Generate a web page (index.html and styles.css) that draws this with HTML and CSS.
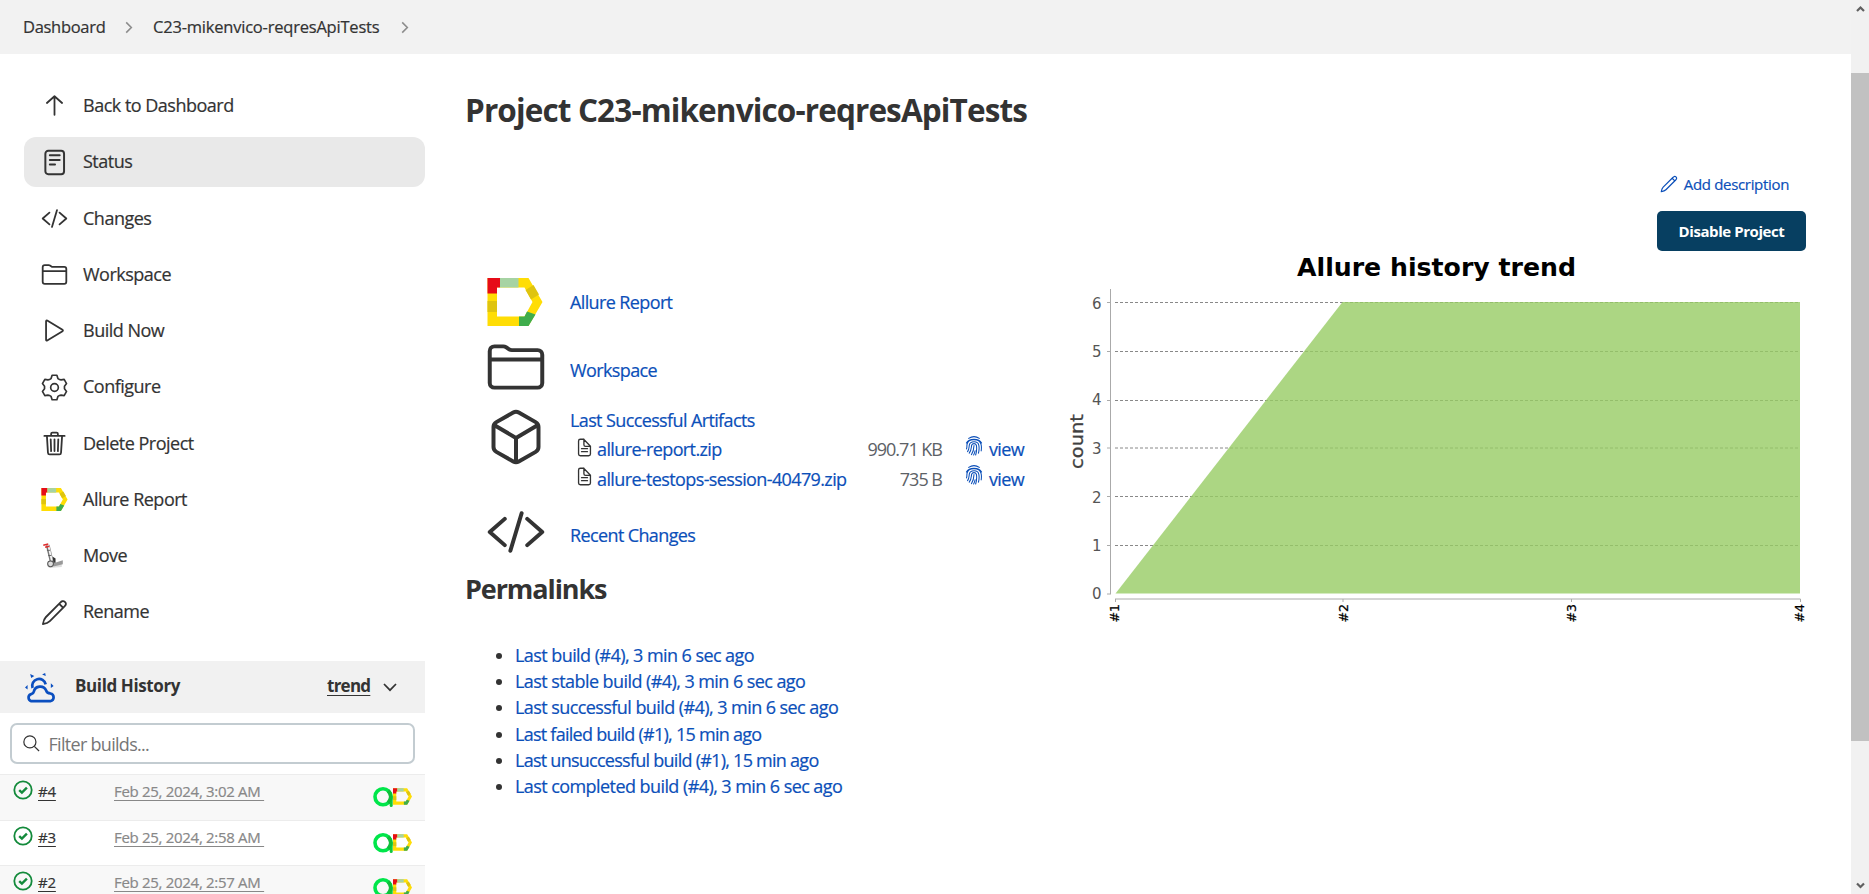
FILE: index.html
```html
<!DOCTYPE html>
<html lang="en">
<head>
<meta charset="utf-8">
<title>C23-mikenvico-reqresApiTests [Jenkins]</title>
<link rel="stylesheet" href="styles.css">
</head>
<body>
<svg class="defs" width="0" height="0" aria-hidden="true">
  <symbol id="code" viewBox="0 0 512 512"><path fill="none" stroke="currentColor" stroke-linecap="round" stroke-linejoin="round" stroke-width="34" d="M160 368L32 256l128-112M352 368l128-112-128-112M304 96l-96 320"/></symbol>
  <symbol id="folder" viewBox="0 0 512 512"><path fill="none" stroke="currentColor" stroke-linecap="round" stroke-linejoin="round" stroke-width="34" d="M440 432H72a40 40 0 01-40-40V120a40 40 0 0140-40h75.89a40 40 0 0122.19 6.72l27.84 18.56a40 40 0 0022.19 6.72H440a40 40 0 0140 40v240a40 40 0 01-40 40zM32 192h448"/></symbol>
  <symbol id="pencil" viewBox="0 0 512 512"><path fill="none" stroke="currentColor" stroke-linecap="round" stroke-linejoin="round" stroke-width="34" d="M36 476c10-62 22-98 54-130L366 70c22-22 54-48 86-16l8 8c26 30 10 56-14 80L168 420c-34 34-70 46-132 56zM346 92l74 74"/></symbol>
  <symbol id="allure" viewBox="0 0 55 48"><path fill="#ffdd05" fill-rule="evenodd" d="M0 0h41l14 24-14 24H0zM9.500 9.500v29h27.500l8-14.500-8-14.500z"/><path fill="#e60b18" d="M0 0h12.500v9.500h-3v6H0z"/><path fill="#a6d3a3" d="M12.500 0H31v9.500H12.500z"/><path fill="#dfc40f" d="M0 23h9.500v11H0zM38 12l8-5 5.500 9.500-8 5z"/><path fill="#3fad4c" d="M31.500 38.500H37l2.500-5 8.500 3L41 48h-9.500z"/></symbol>
  <symbol id="doc" viewBox="0 0 512 512"><path fill="none" stroke="currentColor" stroke-linejoin="round" stroke-linecap="round" stroke-width="36" d="M416 221v210a48 48 0 01-48 48H144a48 48 0 01-48-48V81a48 48 0 0148-48h90l182 188zM240 33v148c0 26 18 43 44 43h132M176 288h160M176 368h160"/></symbol>
  <symbol id="finger" viewBox="0 0 512 512"><g fill="none" stroke="currentColor" stroke-width="27" stroke-linecap="round"><path d="M120 60C200 8 312 8 392 60M62 180C130 48 382 48 450 180M64 330c14-34 8-66 12-110 28-162 322-166 362 0 12 54 12 96 2 160M92 400c44-60 34-110 44-168 24-108 216-112 242 0 12 50 12 124-8 208M134 440c60-74 50-150 62-204 18-54 102-54 120 0 12 56 12 148-18 250M190 478c54-86 64-152 66-236M246 488c16-32 30-68 38-110"/></g></symbol>
  <symbol id="ok" viewBox="0 0 20 20"><circle cx="10" cy="10" r="8.700" fill="none" stroke="#138a3b" stroke-width="1.800"/><path fill="none" stroke="#138a3b" stroke-width="2.400" d="M6.200 10.200l2.700 2.500 5-5"/></symbol>
  <symbol id="ring" viewBox="0 0 20 20"><path d="M18.200 10v8.500" stroke="#12c63e" stroke-width="3" stroke-linecap="round"/><circle cx="10" cy="9.800" r="8" fill="none" stroke="#00e64a" stroke-width="3.600"/><path d="M15 3.800a8 8 0 0 1 0 12" fill="none" stroke="#0fbd3a" stroke-width="3.600"/></symbol>
  <symbol id="chev" viewBox="0 0 8 14"><path fill="none" stroke="currentColor" stroke-width="1.700" d="M1 1.500L6.500 7 1 12.500"/></symbol>
</svg>

<div class="page">
  <header class="crumbs">
    <a class="crumb-a">Dashboard</a><svg class="sep"><use href="#chev"/></svg><a class="crumb-b">C23-mikenvico-reqresApiTests</a><svg class="sep"><use href="#chev"/></svg>
  </header>
  <div class="body">
    <aside class="side">
      <nav class="tasks">
        <a class="task"><svg viewBox="0 0 512 512"><path class="ln" d="M112 208L256 80l144 128M256 92v340"/></svg><span>Back to Dashboard</span></a>
        <a class="task on"><svg viewBox="0 0 26 26"><g class="l26"><rect x="4.200" y="1.700" width="18" height="22.600" rx="2.800"/><path d="M8.500 6h9.500M8.500 10.500h9.500M8.500 15h5"/></g></svg><span>Status</span></a>
        <a class="task"><svg><use href="#code"/></svg><span>Changes</span></a>
        <a class="task"><svg><use href="#folder"/></svg><span>Workspace</span></a>
        <a class="task"><svg viewBox="0 0 512 512"><path class="ln" d="M96 80v352c0 14 10 20 22 14l290-176c11-7 11-21 0-28L118 66c-12-7-22 0-22 14z"/></svg><span>Build Now</span></a>
        <a class="task"><svg viewBox="0 0 26 26"><g class="l26 thin"><circle cx="13" cy="13" r="3.700"/><path d="M10.700 1.200h4.600l1 3.200c1 .7 2 1.100 3 1.200l3-.4 2.300 4-2 2.500v2.600l2 2.500-2.300 4-3-.4c-1 .1-2 .5-3 1.200l-1 3.200h-4.600l-1-3.200c-1-.7-2-1.100-3-1.200l-3 .4-2.300-4 2-2.500v-2.600l-2-2.500 2.300-4 3 .4c1-.1 2-.5 3-1.200z"/></g></svg><span>Configure</span></a>
        <a class="task"><svg viewBox="0 0 512 512"><path class="ln" d="M112 112l20 320c1 18 14 32 32 32h184c18 0 31-14 32-32l20-320M64 112h384M192 112V72c0-14 10-24 24-24h80c14 0 24 10 24 24v40M256 176v224M184 176l8 224M328 176l-8 224"/></svg><span>Delete Project</span></a>
        <a class="task"><svg viewBox="0 0 26 26"><use href="#allure" y="2" width="26" height="22"/></svg><span>Allure Report</span></a>
        <a class="task"><svg viewBox="0 0 26 26"><path d="M6 23l14-2.500v3.500L8 25z" fill="#ddd"/><path d="M12 20.500l9-3v4l-9 2z" fill="#999"/><path d="M11 14l3 2v4h-3z" fill="#333"/><path d="M6.500 3l4 17" stroke="#777" stroke-width="3.600"/><path d="M7 3l3.500 15" stroke="#f4f4f4" stroke-width="1.800"/><path d="M5.700 8h3M7 13h3" stroke="#555" stroke-width=".8"/><path d="M2.200 3.200L7 2M4 5l4-1" stroke="#e02b2b" stroke-width="1.500"/><circle cx="9.200" cy="21" r="2.800" fill="#ddd" stroke="#555"/></svg><span>Move</span></a>
        <a class="task"><svg><use href="#pencil"/></svg><span>Rename</span></a>
      </nav>
      <div class="history-head">
        <svg class="weather" viewBox="0 0 30 30"><path d="M6 27.300h18.500a3.800 3.800 0 0 0 0-7.500c-2.500-.2-3.500-1-4-2.800a6.300 6.300 0 0 0-12 1.200c-.4 2-1.500 2-3 2.400a3.600 3.600 0 0 0 .5 6.700z" fill="none" stroke="#0b4fc0" stroke-width="2.600"/><path d="M7.300 14.500a6.600 6.600 0 1 1 12.700-3.500" fill="none" stroke="#0b4fc0" stroke-width="2.600"/><path d="M5 1l4 1.800-3 2zM16.500 1.500L19.500 0l.6 3zM0 14l2.500-2.500V16zM25 10l2.700 2.500-2.700 2z" fill="#0b4fc0"/></svg>
        <b class="bh">Build History</b><b class="trend">trend</b>
        <svg class="down" viewBox="0 0 14 9"><path d="M1 1l6 6.200L13 1" fill="none" stroke="#333" stroke-width="1.700"/></svg>
      </div>
      <div class="filter"><svg viewBox="0 0 18 18"><circle cx="7.300" cy="7.300" r="6.400"/><path d="M12 12l5 5"/></svg><span>Filter builds...</span></div>
      <div class="build first"><svg class="ok"><use href="#ok"/></svg><a class="num">#4</a><a class="date">Feb 25, 2024, 3:02 AM&nbsp;</a><svg class="ring"><use href="#ring"/></svg><svg class="al"><use href="#allure"/></svg></div>
      <div class="build"><svg class="ok"><use href="#ok"/></svg><a class="num">#3</a><a class="date">Feb 25, 2024, 2:58 AM&nbsp;</a><svg class="ring"><use href="#ring"/></svg><svg class="al"><use href="#allure"/></svg></div>
      <div class="build"><svg class="ok"><use href="#ok"/></svg><a class="num">#2</a><a class="date">Feb 25, 2024, 2:57 AM&nbsp;</a><svg class="ring"><use href="#ring"/></svg><svg class="al"><use href="#allure"/></svg></div>
    </aside>
    <main class="main">
      <div class="left">
        <h1>Project C23-mikenvico-reqresApiTests</h1>
        <div class="row r1"><svg class="big-al"><use href="#allure"/></svg><a>Allure Report</a></div>
        <div class="row r2"><svg class="big"><use href="#folder"/></svg><a>Workspace</a></div>
        <div class="row r3">
          <svg class="big" viewBox="0 0 512 512"><path class="ln" d="M448 341.400V170.600A48 48 0 00423.700 129l-144-82a48 48 0 00-47.400 0l-144 82A48 48 0 0064 170.600v170.800A48 48 0 0088.300 383l144 82a48 48 0 0047.400 0l144-82a48 48 0 0024.300-41.600zM69 153.900l187 110 187-110M256 463.900v-200"/></svg>
          <div class="arts">
            <a>Last Successful Artifacts</a>
            <div class="art"><svg class="doc"><use href="#doc"/></svg><a class="file">allure-report.zip</a><span class="size">990.71 KB</span><svg class="fp"><use href="#finger"/></svg><a class="view">view</a></div>
            <div class="art"><svg class="doc"><use href="#doc"/></svg><a class="file">allure-testops-session-40479.zip</a><span class="size">735 B</span><svg class="fp"><use href="#finger"/></svg><a class="view">view</a></div>
          </div>
        </div>
        <div class="row r4"><svg class="big"><use href="#code"/></svg><a>Recent Changes</a></div>
        <h2>Permalinks</h2>
        <ul class="links">
          <li><a>Last build (#4), 3 min 6 sec ago</a></li>
          <li><a>Last stable build (#4), 3 min 6 sec ago</a></li>
          <li><a>Last successful build (#4), 3 min 6 sec ago</a></li>
          <li><a class="tight">Last failed build (#1), 15 min ago</a></li>
          <li><a class="tight">Last unsuccessful build (#1), 15 min ago</a></li>
          <li><a>Last completed build (#4), 3 min 6 sec ago</a></li>
        </ul>
      </div>
      <div class="right">
        <a class="desc"><svg><use href="#pencil"/></svg><span>Add description</span></a>
        <button class="disable">Disable Project</button>
        <svg class="chart" width="766" height="390" viewBox="1060 250 766 390">
          <text class="title" x="1297" y="276" textLength="279" lengthAdjust="spacingAndGlyphs">Allure history trend</text>
          <path class="grid" d="M1115 302.500H1800M1115 351.500H1800M1115 400.500H1800M1115 448H1800M1115 496.500H1800M1115 545.500H1800"/>
          <path class="area" d="M1115.500 593.500L1342.500 302H1800v291.500z"/>
          <path class="axis" d="M1110.500 289v305M1107 302.500h4M1107 351.500h4M1107 400.500h4M1107 448h4M1107 496.500h4M1107 545.500h4M1107 594h4M1115 599H1800.500M1115.500 599v3M1343 599v3M1571.500 599v3M1800.500 599v3"/>
          <g class="tick"><text x="1101.500" y="308.500">6</text><text x="1101.500" y="357">5</text><text x="1101.500" y="405">4</text><text x="1101.500" y="453.500">3</text><text x="1101.500" y="502.500">2</text><text x="1101.500" y="551">1</text><text x="1101.500" y="599">0</text></g>
          <text class="count" transform="translate(1082.500 469) rotate(-90)" textLength="55" lengthAdjust="spacingAndGlyphs">count</text>
          <g class="cat"><text transform="translate(1119 622.500) rotate(-90)">#1</text><text transform="translate(1347.500 622.500) rotate(-90)">#2</text><text transform="translate(1576 622.500) rotate(-90)">#3</text><text transform="translate(1803.500 622.500) rotate(-90)">#4</text></g>
        </svg>
      </div>
    </main>
  </div>
</div>
<div class="scroll">
  <svg viewBox="0 0 18 18"><path d="M6 11L9.500 7.500 13 11" fill="none" stroke="#606060" stroke-width="2.200"/></svg>
  <div class="thumb"></div>
  <svg viewBox="0 0 18 18"><path d="M6 7.500L9.500 11 13 7.500" fill="none" stroke="#606060" stroke-width="2.200"/></svg>
</div>
</body>
</html>
```
FILE: styles.css
```css
* { box-sizing: border-box; }
html, body { margin: 0; height: 894px; overflow: hidden; }
body {
  display: flex;
  background: #fff;
  color: #333;
  font-family: "Open Sans", "Noto Sans", sans-serif;
  font-size: 18px;
  font-weight: 500;
  white-space: nowrap;
}
svg { display: block; flex: none; }
a { color: #0b4fb9; -webkit-text-stroke: .2px currentColor; }
.defs { position: absolute; }
.page { width: 1851px; height: 894px; overflow: hidden; }

.crumbs {
  display: flex;
  align-items: center;
  height: 54px;
  padding-left: 23px;
  background: #f2f2f2;
  font-size: 16.500px;
  letter-spacing: -.21px;
}
.crumbs a { margin-top: -2px; }
.crumb-a { width: 82px; letter-spacing: -.3px; }
.crumb-b { width: 228px; }
.sep { width: 8px; height: 13px; margin: 0 20px; color: #8c8c8c; }

.body { display: flex; }
.side { width: 425px; }
.tasks { padding: 27px 0 0 24px; }
.task {
  display: flex;
  align-items: center;
  gap: 16px;
  height: 50px;
  margin-bottom: 6.250px;
  padding-left: 16.500px;
  border-radius: 12px;
  letter-spacing: -.5px;
}
.task span { margin: -2px 0 0 -.5px; }
.task.on { background: #e9e9e9; }
.task svg { width: 27px; height: 27px; margin-top: -.500px; }
.ln { fill: none; stroke: currentColor; stroke-width: 34; stroke-linecap: round; stroke-linejoin: round; }
.l26 { fill: none; stroke: currentColor; stroke-width: 1.900; stroke-linecap: round; stroke-linejoin: round; }
.thin { stroke-width: 1.600; }

.history-head {
  display: flex;
  align-items: center;
  height: 52px;
  margin-top: 24px;
  padding-left: 25px;
  background: #f1f1f1;
  font-size: 17px;
  letter-spacing: -.38px;
}
.weather { width: 31px; height: 31px; margin: 3px 19px 0 0; }
.bh { width: 252px; margin-top: -3px; }
.trend { width: 44px; margin-top: -3px; letter-spacing: -.75px; text-decoration: underline; text-underline-offset: 3px; }
.down { width: 14px; height: 9px; margin-left: 12px; margin-top: 1px; }
.filter {
  display: flex;
  align-items: center;
  gap: 9px;
  height: 41px;
  margin: 10px;
  padding-left: 10.500px;
  border: 2px solid #c3ccd1;
  border-radius: 7px;
  color: #767676;
  font-weight: 400;
  letter-spacing: -.7px;
}
.filter svg { width: 17px; height: 17px; fill: none; stroke: #333; stroke-width: 1.300; }
.build {
  display: flex;
  align-items: flex-start;
  height: 45px;
  padding: 5px 13px 0;
  border-top: 1px solid #ececec;
  font-size: 15px;
  letter-spacing: -.3px;
}
.build.first { height: 46px; }
.build:nth-of-type(odd) { background: #f8f8f8; }
.build a { text-decoration: underline; text-underline-offset: 3px; line-height: 23px; }
.ok { width: 20px; height: 20px; }
.num { width: 77px; padding-left: 5px; letter-spacing: -.2px; }
.date { width: 263px; padding-left: 4px; font-weight: 400; }
.ring, .al { width: 20px; height: 20px; margin-top: 7px; }
.al { width: 19px; height: 17px; margin-top: 8px; }

.main { display: flex; flex: 1; padding-left: 40px; }
.left { width: 595px; }
h1, h2 { margin: 0; font-weight: 700; }
h1 { height: 167px; padding-top: 35px; font-size: 31.500px; line-height: 42px; letter-spacing: -.87px; }
h2 { height: 42px; margin-top: 5px; font-size: 27px; line-height: 36px; letter-spacing: -1.100px; }
.crumbs a, .task, .build .num { color: #333; }
.build .date { color: #888; }
.left a { letter-spacing: -.62px; }
.left .links a { letter-spacing: -.57px; }
.left .links .tight { letter-spacing: -.74px; }
.row { display: flex; padding-left: 22px; }
.r1, .r2, .r4 { align-items: center; }
.r1 { height: 56px; margin-top: 53px; }
.big-al { width: 56px; height: 48px; margin-right: 27px; }
.big { width: 60px; height: 60px; margin: 0 24px 0 -1px; }
.r2 { height: 72px; }
.r2 .big { margin-top: 1px; }
.r2 a { margin-top: 7px; }
.r3 { height: 92px; margin-top: 4px; }
.r3 .big { margin-top: 1px; }
.r4 { height: 68px; }
.r4 a { margin-top: 6px; }
.arts { line-height: 29px; }
.art { display: flex; align-items: center; height: 30px; margin-top: -.500px; }
.doc { width: 19px; height: 19px; margin: -5px 3.500px 0 4.500px; }
.file { width: 250px; }
.size { width: 95px; text-align: right; color: #5c6166; font-weight: 400; letter-spacing: -1px; }
.fp { width: 20px; height: 22px; margin: -8px 5px 0 22px; color: #0b4fb9; }
.links { margin: 29px 0 0; padding-left: 50px; }
.links li { height: 26.200px; line-height: 26px; }

.right { display: flex; flex-direction: column; align-items: flex-end; width: 766px; padding-top: 118px; }
.desc { display: flex; align-items: center; gap: 6px; height: 24px; margin-right: 37px; font-size: 15px; letter-spacing: -.33px; }
.desc svg { width: 18px; height: 18px; }
.disable {
  width: 149px;
  height: 40px;
  margin: 15px 20px 0 0;
  border: 0;
  border-radius: 5px;
  background: #073f61;
  color: #fff;
  font: 700 15px "Open Sans", sans-serif;
  letter-spacing: -.43px;
}
.chart { margin-top: -1px; font-family: "DejaVu Sans", sans-serif; font-weight: 400; }
.title { font-size: 25px; font-weight: 700; fill: #000; }
.grid { fill: none; stroke: #888; stroke-width: 1; stroke-dasharray: 3 2; }
.area { fill: #97cc64; fill-opacity: .8; }
.axis { fill: none; stroke: #aaa; stroke-width: 1; }
.tick { font-size: 15px; fill: #555; text-anchor: end; }
.count { font-size: 18.500px; fill: #404040; stroke: #404040; stroke-width: .3; }
.cat { font-size: 12.500px; fill: #000; stroke: #000; stroke-width: .25; }

.scroll { display: flex; flex-direction: column; width: 18px; height: 894px; background: #f1f1f1; }
.scroll svg { width: 18px; height: 18px; }
.thumb { height: 668px; margin: 55px 0 135px; background: #c1c1c1; }
```
